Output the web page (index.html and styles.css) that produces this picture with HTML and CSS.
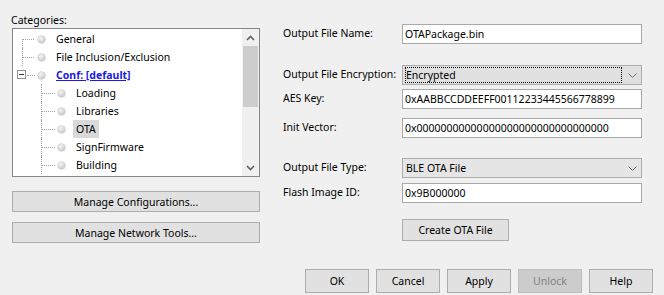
FILE: index.html
```html
<!doctype html>
<html lang="en">
  <head>
    <meta charset="UTF-8" />
    <title>OTA Properties</title>
    <link rel="stylesheet" href="styles.css">
  </head>
  <body>
    <div class="dialog">
      <div class="main">
        <div class="left">
          <div class="cat-label">Categories:</div>
          <div class="tree">
            <div class="tree-list">
              <div class="node top first"><span class="bullet"></span><span class="text">General</span></div>
              <div class="node top"><span class="bullet"></span><span class="text">File Inclusion/Exclusion</span></div>
              <div class="node top last open"><span class="expander"></span><span class="bullet"></span><span class="text link">Conf: [default]</span></div>
              <div class="node child"><span class="bullet"></span><span class="text">Loading</span></div>
              <div class="node child"><span class="bullet"></span><span class="text">Libraries</span></div>
              <div class="node child"><span class="bullet"></span><span class="text selected">OTA</span></div>
              <div class="node child"><span class="bullet"></span><span class="text">SignFirmware</span></div>
              <div class="node child"><span class="bullet"></span><span class="text">Building</span></div>
            </div>
            <div class="scrollbar">
              <div class="arrow">
                <svg width="9" height="6" viewBox="0 0 9 6"><polyline points="1,5 4.5,1.5 8,5" fill="none" stroke="#606060" stroke-width="1.6"/></svg>
              </div>
              <div class="track"><div class="thumb"></div></div>
              <div class="arrow">
                <svg width="9" height="6" viewBox="0 0 9 6"><polyline points="1,1 4.5,4.5 8,1" fill="none" stroke="#606060" stroke-width="1.6"/></svg>
              </div>
            </div>
          </div>
          <button class="btn wide first-wide">Manage Configurations...</button>
          <button class="btn wide">Manage Network Tools...</button>
        </div>

        <div class="right">
          <div class="row r-name">
            <label>Output File Name:</label>
            <div class="field">OTAPackage.bin</div>
          </div>
          <div class="row r-enc">
            <label>Output File Encryption:</label>
            <div class="combo focused">
              <span class="combo-value"><span class="focus-rect">Encrypted</span></span>
              <span class="combo-arrow">
                <svg width="9" height="5" viewBox="0 0 9 5"><polyline points="0.5,0.5 4.5,4.5 8.5,0.5" fill="none" stroke="#707070" stroke-width="1"/></svg>
              </span>
            </div>
          </div>
          <div class="row r-aes">
            <label>AES Key:</label>
            <div class="field">0xAABBCCDDEEFF00112233445566778899</div>
          </div>
          <div class="row r-iv">
            <label>Init Vector:</label>
            <div class="field">0x00000000000000000000000000000000</div>
          </div>
          <div class="row r-type">
            <label>Output File Type:</label>
            <div class="combo">
              <span class="combo-value">BLE OTA File</span>
              <span class="combo-arrow">
                <svg width="9" height="5" viewBox="0 0 9 5"><polyline points="0.5,0.5 4.5,4.5 8.5,0.5" fill="none" stroke="#707070" stroke-width="1"/></svg>
              </span>
            </div>
          </div>
          <div class="row r-flash">
            <label>Flash Image ID:</label>
            <div class="field">0x9B000000</div>
          </div>
          <div class="row r-create">
            <span class="spacer"></span>
            <button class="btn create">Create OTA File</button>
          </div>
        </div>
      </div>

      <div class="footer">
        <button class="btn small">OK</button>
        <button class="btn small">Cancel</button>
        <button class="btn small">Apply</button>
        <button class="btn small" disabled>Unlock</button>
        <button class="btn small">Help</button>
      </div>
    </div>
  </body>
</html>
```

FILE: styles.css
```css
body {
  margin: 0;
  background: #f0f0f0;
  font-family: 'Segoe UI', 'Noto Sans', sans-serif;
  font-size: 10.5px;
  color: #000;
}

.dialog {
  width: 664px;
  height: 295px;
  display: flex;
  flex-direction: column;
}

.main {
  display: flex;
  height: 266px;
}

/* left side: category tree */

.left {
  width: 248px;
  padding-left: 12px;
  padding-top: 12px;
  display: flex;
  flex-direction: column;
}

.cat-label {
  height: 16px;
  line-height: 16px;
  margin-left: -1px;
}

.tree {
  height: 149px;
  border: 1px solid #828790;
  background: #fff;
  display: flex;
  box-sizing: border-box;
}

.tree-list {
  flex: 1;
  padding-top: 1px;
  overflow: hidden;
}

.node {
  height: 18px;
  display: flex;
  align-items: center;
  position: relative;
  white-space: nowrap;
}

.node.top {
  padding-left: 25px;
}

.node.child {
  padding-left: 45px;
}

.node::before {
  content: "";
  position: absolute;
  top: 9px;
  border-top: 1px dotted #a0a0a0;
}

.node::after {
  content: "";
  position: absolute;
  top: 0;
  bottom: 0;
  border-left: 1px dotted #a0a0a0;
}

.node.top::before {
  left: 10px;
  width: 11px;
}

.node.top::after {
  left: 9px;
}

.node.top.first::after {
  top: 9px;
}

.node.top.last::after {
  bottom: 9px;
}

.node.top.open::after {
  display: none;
}

.node.top.open::before {
  left: 14px;
  width: 8px;
}

.node.child::before {
  left: 29px;
  width: 13px;
}

.node.child::after {
  left: 28px;
}

.expander {
  position: absolute;
  left: 4px;
  top: 4px;
  width: 7px;
  height: 7px;
  border: 1px solid #919191;
  background: #fff;
}

.expander::after {
  content: "";
  position: absolute;
  left: 1px;
  top: 3px;
  width: 5px;
  border-top: 1px solid #333;
}

.bullet {
  width: 7px;
  height: 7px;
  border-radius: 50%;
  background: radial-gradient(circle at 40% 35%, #f6f6f6 0, #d4d4d4 55%, #b0b0b0 100%);
  box-shadow: 0 0 0 0.5px #bdbdbd;
  flex: none;
}

.text {
  margin-left: 8px;
  padding: 0 3px;
  line-height: 18px;
}

.text.link {
  color: #1a1ae0;
  font-weight: bold;
  text-decoration: underline;
}

.text.selected {
  background: #d9d9d9;
}

.scrollbar {
  width: 17px;
  background: #f0f0f0;
  display: flex;
  flex-direction: column;
}

.scrollbar .arrow {
  height: 17px;
  display: flex;
  align-items: center;
  justify-content: center;
}

.scrollbar .track {
  flex: 1;
  padding: 0 1px;
}

.thumb {
  height: 61px;
  background: #cdcdcd;
}

/* buttons */

.btn {
  font-family: inherit;
  font-size: 10.5px;
  color: #000;
  background: #e1e1e1;
  border: 1px solid #adadad;
  height: 21px;
  padding: 0;
  margin: 0;
}

.btn:disabled {
  background: #cccccc;
  border-color: #bfbfbf;
  color: #838383;
}

.btn.wide {
  width: 248px;
}

.btn.first-wide {
  margin-top: 14px;
  margin-bottom: 10px;
}

.btn.small {
  width: 64px;
  height: 24px;
}

.btn.create {
  width: 107px;
  height: 22px;
}

/* right side: form */

.right {
  margin-left: 23px;
  padding-top: 24px;
  display: flex;
  flex-direction: column;
}

.row {
  display: flex;
  align-items: center;
  height: 20px;
}

.row label {
  width: 119px;
  margin-top: -2px;
}

.row .spacer {
  width: 119px;
}

.r-enc { margin-top: 21px; }
.r-aes { margin-top: 4px; }
.r-iv { margin-top: 9px; }
.r-type { margin-top: 20px; }
.r-flash { margin-top: 5px; }
.r-create { margin-top: 16px; height: 22px; }

.field {
  width: 240px;
  height: 20px;
  box-sizing: border-box;
  border: 1px solid #a9a9a9;
  background: #fff;
  padding: 0 2px;
  line-height: 18px;
}

.combo {
  width: 240px;
  height: 20px;
  box-sizing: border-box;
  border: 1px solid #adadad;
  background: #e5e5e5;
  display: flex;
  align-items: center;
}

.combo.focused {
  background: #e0e0e0;
}

.combo-value {
  flex: 1;
  padding-left: 2px;
  height: 16px;
  line-height: 16px;
}

.combo:not(.focused) .combo-value {
  padding-left: 3px;
}

.focus-rect {
  display: block;
  margin-right: 2px;
  height: 14px;
  line-height: 14px;
  border: 1px dotted #000;
}

.combo-arrow {
  width: 17px;
  display: flex;
  justify-content: center;
}

/* dialog buttons */

.footer {
  display: flex;
  gap: 7px;
  justify-content: flex-end;
  padding-right: 11px;
  padding-top: 3px;
}
```
